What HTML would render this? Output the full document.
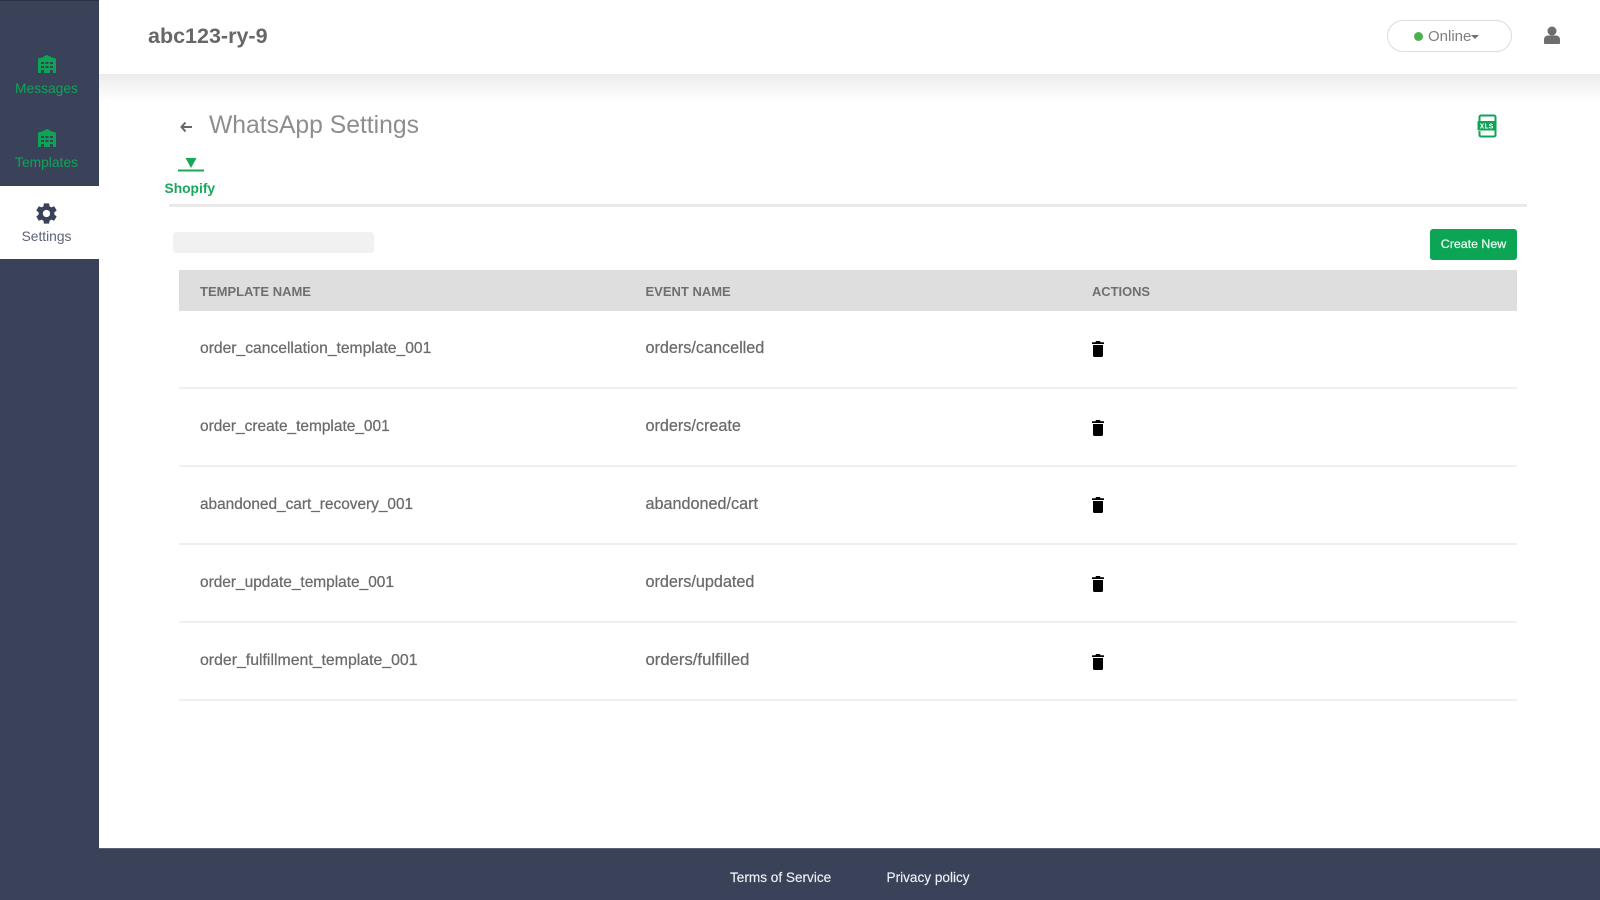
<!DOCTYPE html>
<html><head><meta charset="utf-8"><style>
*{box-sizing:border-box}
html,body{margin:0;width:1600px;height:900px;overflow:hidden;background:#fff;font-family:"Liberation Sans",sans-serif;color:#6e6e6e}
.a{position:absolute;white-space:nowrap}
.side{left:0;top:0;width:99px;height:900px;background:#3a4259;border-top:1px solid #2c3245}
.nav{width:93px;left:0;text-align:center;font-size:13.8px;line-height:16px}
.cell{font-size:15.45px;line-height:18px;color:#6b6b6b;-webkit-text-stroke:.25px #6b6b6b}
.r{left:645.500px;font-size:16.200px}
.th{font-size:13px;font-weight:bold;line-height:16px;top:284px;color:#6f6f6f}
.line{left:179px;width:1338px;height:2px;background:#efefef}
</style></head><body>
<div class="a" style="left:99px;top:74px;width:1501px;height:28px;background:linear-gradient(#ececec,#fff)"></div>
<div class="a" style="left:99px;top:0;width:1501px;height:74px;background:#fff"></div>
<div class="a side"></div>
<div class="a" style="left:0;top:186px;width:99px;height:73px;background:#fff"></div>

<svg class="a" style="left:37px;top:55px" width="20" height="20" viewBox="0 0 20 20"><path fill="#0ea455" fill-rule="evenodd" d="M10 0 L16 3 H17 a2 2 0 0 1 2 2 V18 H1 V5 a2 2 0 0 1 2-2 H4 Z M4 7v2h3V7Zm4.500 0v2h3V7ZM13 7v2h3V7ZM4 11v2h3v-2Zm4.500 0v2h3v-2ZM13 11v2h3v-2ZM4 15v3h3v-3ZM13 15v3h3v-3Z"/></svg>
<div class="a nav" style="top:81px;color:#0ea455">Messages</div>
<svg class="a" style="left:37px;top:129px" width="20" height="20" viewBox="0 0 20 20"><path fill="#0ea455" fill-rule="evenodd" d="M10 0 L16 3 H17 a2 2 0 0 1 2 2 V18 H1 V5 a2 2 0 0 1 2-2 H4 Z M4 7v2h3V7Zm4.500 0v2h3V7ZM13 7v2h3V7ZM4 11v2h3v-2Zm4.500 0v2h3v-2ZM13 11v2h3v-2ZM4 15v3h3v-3ZM13 15v3h3v-3Z"/></svg>
<div class="a nav" style="top:155px;color:#0ea455">Templates</div>
<svg class="a" style="left:36px;top:203px" width="21" height="21" viewBox="2 2 20 20"><path fill="#3a4259" d="M19.400 13a7.500 7.500 0 0 0 0-2l2.300-1.800-2.400-4.100-2.700 1.100a7.500 7.500 0 0 0-1.700-1L14.500 2.300h-5L9.100 5.200a7.500 7.500 0 0 0-1.700 1L4.700 5.100 2.300 9.200 4.600 11a7.500 7.500 0 0 0 0 2l-2.300 1.800 2.400 4.100 2.700-1.100a7.500 7.500 0 0 0 1.700 1l.4 2.900h5l.4-2.900a7.500 7.500 0 0 0 1.700-1l2.700 1.100 2.400-4.100ZM12 15.500a3.500 3.500 0 1 1 0-7 3.500 3.500 0 0 1 0 7Z"/></svg>
<div class="a nav" style="top:229px;color:#5d6478">Settings</div>

<div class="a" style="left:148px;top:23px;font-size:21.500px;line-height:26px;font-weight:bold;color:#676767">abc123-ry-9</div>

<div class="a" style="left:1387px;top:20px;width:125px;height:32px;border:1px solid #dcdcdc;border-radius:16px"></div>
<div class="a" style="left:1414px;top:32px;width:9px;height:9px;border-radius:50%;background:#4caf50"></div>
<div class="a" style="left:1428px;top:28px;font-size:15px;line-height:18px;color:#808080">Online</div>
<div class="a" style="left:1471px;top:35px;width:0;height:0;border:4px solid transparent;border-top:4px solid #707070"></div>
<svg class="a" style="left:1544px;top:26px" width="16" height="19" viewBox="0 0 16 19"><circle cx="8" cy="5" r="4.500" fill="#6e6e6e"/><path fill="#6e6e6e" d="M1 18a1 1 0 0 1-1-1v-3.500C0 11 2 9.500 4 9.500h8c2 0 4 1.500 4 4V17a1 1 0 0 1-1 1Z"/></svg>

<svg class="a" style="left:180px;top:120.500px" width="12" height="12" viewBox="0 0 12 12"><path d="M5.500 1.500 1.500 6 5.500 10.500M2 6h10" fill="none" stroke="#666" stroke-width="2"/></svg>
<div class="a" style="left:209px;top:111px;font-size:24.700px;line-height:30px;color:#8e8e8e">WhatsApp Settings</div>
<svg class="a" style="left:1476px;top:114px" width="22" height="24" viewBox="0 0 22 24"><path fill="none" stroke="#0ea455" stroke-width="2" d="M3.500 7V3A1.500 1.500 0 0 1 5 1.500h13A1.500 1.500 0 0 1 19.500 3v18a1.500 1.500 0 0 1-1.500 1.500H5A1.500 1.500 0 0 1 3.500 21v-4"/><rect x="1.500" y="7" width="18" height="9.500" rx="1" fill="#0ea455"/><text x="10.500" y="14.500" text-anchor="middle" font-family="Liberation Mono" font-size="7.500" font-weight="bold" fill="#fff">XLS</text></svg>

<svg class="a" style="left:178px;top:157.500px" width="26" height="14" viewBox="0 0 26 14"><path d="M7.500 0h11L13 10Z" fill="#17a85c"/><rect y="11.500" width="26" height="2" fill="#17a85c"/></svg>
<div class="a" style="left:164.500px;top:179.500px;font-size:13.800px;line-height:18px;font-weight:bold;color:#17a85c">Shopify</div>
<div class="a" style="left:169px;top:204px;width:1358px;height:3px;background:#e9e9e9"></div>

<div class="a" style="left:173px;top:232px;width:201px;height:21px;background:#f1f1f1;border-radius:3px"></div>
<div class="a" style="left:1430px;top:229px;width:87px;height:31px;background:#0ca555;border-radius:3px;color:#eafff2;text-align:center;font-size:12.400px;line-height:31px;-webkit-text-stroke:.2px #eafff2">Create New</div>

<div class="a" style="left:179px;top:270px;width:1338px;height:41px;background:#dedede"></div>
<div class="a th" style="left:200px">TEMPLATE NAME</div>
<div class="a th" style="left:645.500px">EVENT NAME</div>
<div class="a th" style="left:1092px;font-size:12.900px">ACTIONS</div>

<div class="a cell" style="left:200px;top:340px;font-size:15.650px">order_cancellation_template_001</div>
<div class="a cell r" style="top:339px">orders/cancelled</div>
<div class="a line" style="top:387px"></div>
<div class="a cell" style="left:200px;top:417.500px">order_create_template_001</div>
<div class="a cell r" style="top:417px">orders/create</div>
<div class="a line" style="top:465px"></div>
<div class="a cell" style="left:200px;top:495.500px;font-size:15.400px">abandoned_cart_recovery_001</div>
<div class="a cell r" style="top:495px">abandoned/cart</div>
<div class="a line" style="top:543px"></div>
<div class="a cell" style="left:200px;top:573.500px">order_update_template_001</div>
<div class="a cell r" style="top:573px">orders/updated</div>
<div class="a line" style="top:621px"></div>
<div class="a cell" style="left:200px;top:651.500px;font-size:15.850px">order_fulfillment_template_001</div>
<div class="a cell r" style="top:651px;font-size:16.700px">orders/fulfilled</div>
<div class="a line" style="top:699px"></div>

<svg width="0" height="0" style="position:absolute"><defs><symbol id="t" viewBox="0 0 12 16"><path fill="#000" d="M4 0h4l.5 1.200H11.500a.5.5 0 0 1 .5.500V3H0V1.700a.5.5 0 0 1 .5-.5H3.500ZM1 4h10v10.500A1.500 1.500 0 0 1 9.500 16h-7A1.500 1.500 0 0 1 1 14.500Z"/></symbol></defs></svg>
<svg class="a" style="left:1092px;top:341px" width="12" height="16"><use href="#t"/></svg>
<svg class="a" style="left:1092px;top:419.500px" width="12" height="16"><use href="#t"/></svg>
<svg class="a" style="left:1092px;top:497px" width="12" height="16"><use href="#t"/></svg>
<svg class="a" style="left:1092px;top:576px" width="12" height="16"><use href="#t"/></svg>
<svg class="a" style="left:1092px;top:654px" width="12" height="16"><use href="#t"/></svg>

<div class="a" style="left:99px;top:848px;width:1501px;height:52px;background:#3a4259;border-top:1px solid #5a6072"></div>
<div class="a" style="left:730px;top:868.500px;font-size:13.600px;line-height:17px;color:#eef0f4;-webkit-text-stroke:.15px #eef0f4">Terms of Service</div>
<div class="a" style="left:886.500px;top:868.500px;font-size:13.600px;line-height:17px;color:#eef0f4;-webkit-text-stroke:.15px #eef0f4">Privacy policy</div>
</body></html>
